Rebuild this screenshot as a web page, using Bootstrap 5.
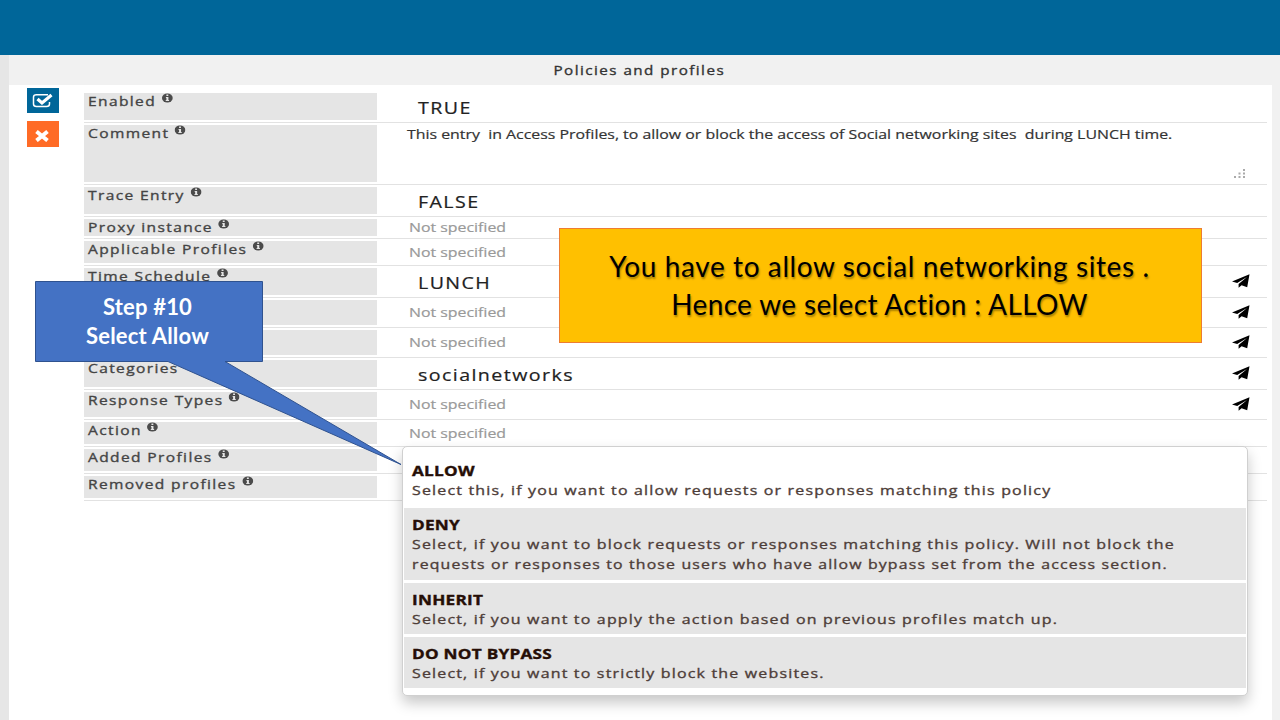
<!DOCTYPE html>
<html lang="en">
<head>
<meta charset="utf-8">
<meta name="viewport" content="width=device-width, initial-scale=1">
<title>Policies and profiles</title>
<link href="https://cdn.jsdelivr.net/npm/bootstrap@5.3.0/dist/css/bootstrap.min.css" rel="stylesheet">
<style>
body{width:1280px;height:720px;overflow:hidden;background:#fff;font-family:"Open Sans","Noto Sans",sans-serif;color:#444}
.topbar{height:55px;background:#006699}
.frame{height:665px;border-left:9px solid #e6e6e6;border-right:8px solid #f1f1f1}
.title{height:30px;background:#f1f1f1;font-size:13.5px;letter-spacing:1.3px;color:#333;line-height:30px;padding-right:2px}
.wide{display:inline-block;transform:scaleX(1.15);transform-origin:left;-webkit-text-stroke:.35px}
.title .wide{transform:scaleX(1.125);transform-origin:center}
.tools{width:75px;padding:3px 0 0 18px}
.tool{width:32px;height:25px;margin-bottom:8px}
.tool.save{background:#006699}
.tool.cancel{background:#ff6b26;height:26px;padding-top:3px}
.fields{width:1183px;padding-top:6px}
.field{height:30px;border-bottom:1px solid #e2e2e2;padding:2px 0}
.h62{height:62px}.h32{height:32px}.h27{height:27px}.h22{height:22px}
.name{width:293px;background:#e5e5e5;padding-left:4px;font-size:13.5px;line-height:16px;letter-spacing:1.2px;color:#444;white-space:nowrap}
.name svg{vertical-align:top;margin:0 0 0 4.500px}
.value{padding-left:32px;font-size:13.5px;white-space:pre}
.value .wide{transform:scaleX(1.176)}
.none{color:#999}
.none .wide{-webkit-text-stroke:.2px}
.set{padding:4px 0 0 41px;font-size:16.5px;letter-spacing:1.2px;color:#222}
.set .wide{transform:scaleX(1.188);-webkit-text-stroke:.2px}
.note{padding-left:30px;line-height:18px;color:#333}
.note .wide{-webkit-text-stroke:.2px}
.grip{margin:43px 20px 0 0}
.plane{margin:0 17px 1px 0}
.options{left:402px;top:446px;width:846px;height:250px;border:1px solid #d0d0d0;border-radius:5px;box-shadow:0 7px 14px rgba(0,0,0,.22);padding:1px;letter-spacing:1px;font-size:13.5px;color:#4d3d38;white-space:nowrap}
.option{background:#e5e5e5;padding:7px 8px 0;margin-bottom:3px;height:51px;line-height:20px}
.option .wide{transform:scaleX(1.182);display:block;width:690px}
.option b.wide{color:#260e06;letter-spacing:.2px;transform:scaleX(1.272);height:19px}
.option .snug{transform:scaleX(1.172)}
.option.tall{height:72px}
.option.active-option{background:#fff;height:60px;margin:0;padding-top:13px}
.notice{left:559px;top:228px;width:643px;height:115px;background:#ffc000;border:1px solid #ed7d31;color:#000;font-family:Lato,"Liberation Sans",sans-serif;font-size:28px;line-height:38px;text-shadow:1px 2px 2px rgba(0,0,0,.35);white-space:nowrap;letter-spacing:.6px;padding:0 2px 1px 0;font-variant-ligatures:none}
.notice .second{letter-spacing:.35px}
.step{left:35px;top:281px;width:228px;height:81px;padding-bottom:1px;color:#fff;font:bold 22px/29px Lato,"Liberation Sans",sans-serif;letter-spacing:.2px;padding-right:3px}
.tail{left:0;top:0}
</style>
</head>
<body class="position-relative">
<svg width="0" height="0" class="position-absolute">
<symbol id="info" viewBox="0 0 12 10" preserveAspectRatio="none"><ellipse cx="6" cy="5" rx="5.6" ry="4.6" fill="#4b4b4b"/><path d="M5 1.4h2v1.5H5zM4.5 4h2.6v3.1h.7v1H4.3v-1H5V5h-.5z" fill="#e5e5e5"/></symbol>
<symbol id="plane" viewBox="0 0 18 14"><path d="M17.500.3 0 7.500l5.200 1.600L15 3 6.600 10v3.700l3-2.400 5.600 2z" fill="#000"/></symbol>
</svg>
<header class="topbar"></header>
<main class="frame">
<div class="title text-center"><span class="wide">Policies and profiles</span></div>
<div class="d-flex">
<div class="tools">
<div class="tool save d-flex align-items-center justify-content-center"><svg width="22" height="15" viewBox="0 0 22 15" fill="none" stroke="#fff"><path d="M16 1.800H4.500Q1.500 1.800 1.500 4v7q0 2.500 3 2.500h10q3 0 3-2.500V9" stroke-width="1.500"/><path d="m5.500 6 4.500 4 9.500-8" stroke-width="3.200"/></svg></div>
<div class="tool cancel d-flex align-items-center justify-content-center"><svg width="18" height="13" viewBox="0 0 18 13"><path d="m2.500 2.500 11 9m0-9-11 9" stroke="#fff" stroke-width="4"/></svg></div>
</div>
<div class="fields" id="fields"></div>
</div>
</main>
<section class="options position-absolute bg-white">
<div class="option active-option"><b class="wide">ALLOW</b><span class="wide">Select this, if you want to allow requests or responses matching this policy</span></div>
<div class="option tall"><b class="wide">DENY</b><span class="wide">Select, if you want to block requests or responses matching this policy. Will not block the</span><span class="wide snug">requests or responses to those users who have allow bypass set from the access section.</span></div>
<div class="option"><b class="wide">INHERIT</b><span class="wide">Select, if you want to apply the action based on previous profiles match up.</span></div>
<div class="option"><b class="wide">DO NOT BYPASS</b><span class="wide">Select, if you want to strictly block the websites.</span></div>
</section>
<aside class="notice position-absolute d-flex flex-column justify-content-center align-items-center"><span>You have to allow social networking sites .</span><span class="second">Hence we select Action : ALLOW</span></aside>
<svg class="tail position-absolute" width="410" height="470" viewBox="0 0 410 470"><path d="M35.500 281.500h227v80h-37.500l176 103-233-103H35.500z" fill="#4472c4" stroke="#2f528f"/></svg>
<div class="step position-absolute d-flex flex-column justify-content-center align-items-center"><span>Step #10</span><span>Select Allow</span></div>
<script src="https://cdn.jsdelivr.net/npm/bootstrap@5.3.0/dist/js/bootstrap.bundle.min.js"></script>
<script>
const rows=[
["Enabled","h32","set","TRUE"],
["Comment","h62","note","This entry  in Access Profiles, to allow or block the access of Social networking sites  during LUNCH time."],
["Trace Entry","h32","set","FALSE"],
["Proxy instance","h22","none","Not specified"],
["Applicable Profiles","h27","none","Not specified"],
["Time Schedule","h32","set","LUNCH",1],
["","","none","Not specified",1],
["","","none","Not specified",1],
["Categories","h32","set","socialnetworks",1],
["Response Types","","none","Not specified",1],
["Action","h27","none","Not specified"],
["Added Profiles","h27","none",""],
["Removed profiles","h27","none",""]];
const info='<svg width="10" height="10"><use href="#info"/></svg>';
const grip='<svg class="grip" width="14" height="11" fill="#aaa"><path d="M1 8h2v2H1zM5.500 8h2v2h-2zM10 8h2v2h-2zM5.500 4.500h2v2h-2zM10 4.500h2v2h-2zM10 1h2v2h-2z"/></svg>';
const plane='<svg class="plane align-self-center" width="18" height="14"><use href="#plane"/></svg>';
document.getElementById("fields").innerHTML=rows.map(([name,height,kind,value,link])=>`<div class="field d-flex ${height}"><div class="name">${name?`<span class="wide">${name}${name==="Categories"?"":info}</span>`:""}</div><div class="value ${kind} d-flex flex-grow-1 align-items-${kind==="note"?"start":"center"}"><span class="wide">${value}</span></div>${kind==="note"?grip:link?plane:""}</div>`).join("");
</script>
</body>
</html>
